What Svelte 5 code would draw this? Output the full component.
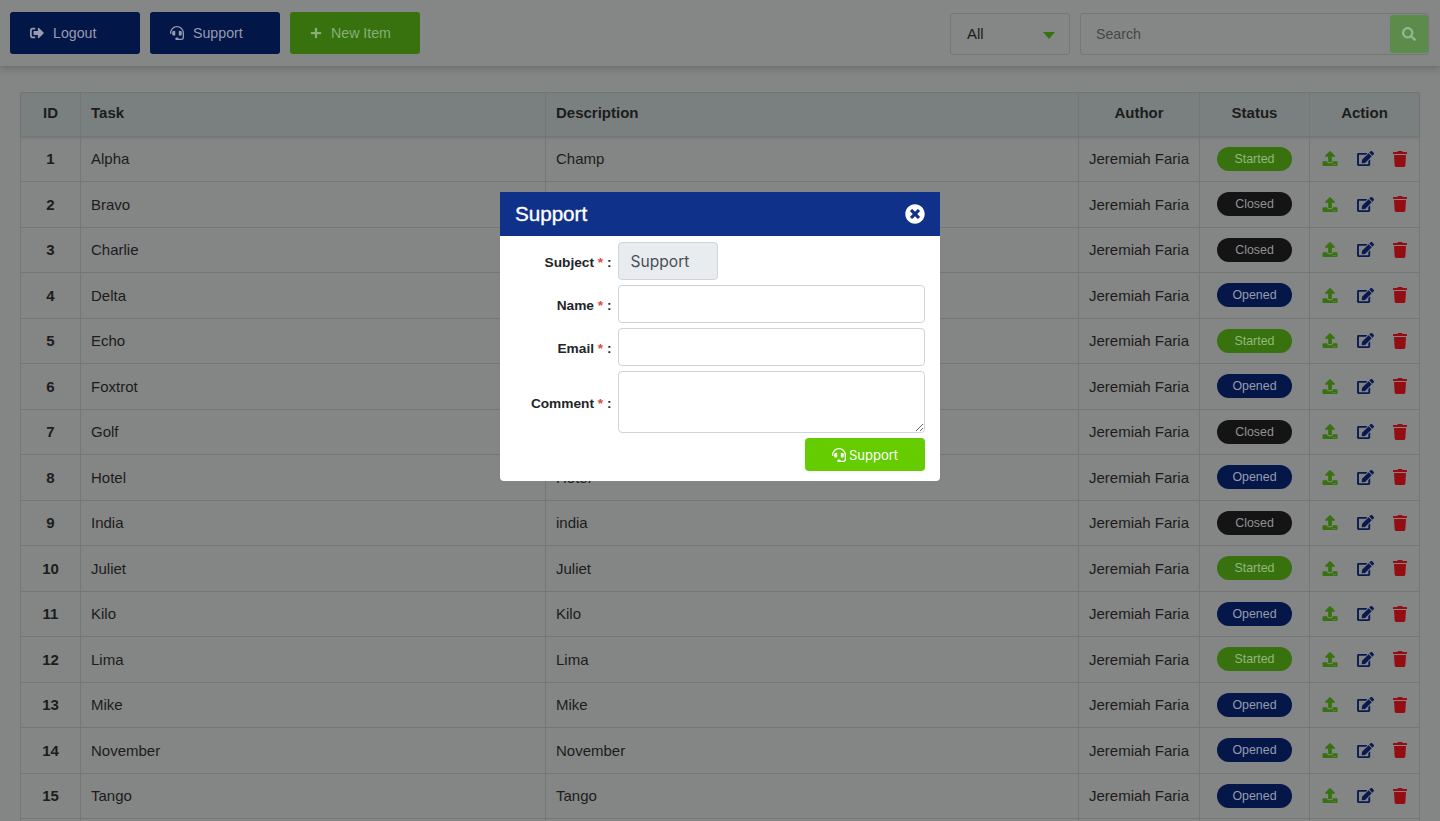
<script>
  const rows = [
    ['Alpha','Champ','Started'],['Bravo','','Closed'],['Charlie','','Closed'],['Delta','','Opened'],
    ['Echo','','Started'],['Foxtrot','','Opened'],['Golf','','Closed'],['Hotel','Hotel','Opened'],
    ['India','india','Closed'],['Juliet','Juliet','Started'],['Kilo','Kilo','Opened'],['Lima','Lima','Started'],
    ['Mike','Mike','Opened'],['November','November','Opened'],['Tango','Tango','Opened']
  ];
  const headset = 'M192 208c0-17.67-14.33-32-32-32h-16c-35.35 0-64 28.65-64 64v48c0 35.35 28.65 64 64 64h16c17.67 0 32-14.33 32-32V208zm176 144c35.35 0 64-28.65 64-64v-48c0-35.35-28.65-64-64-64h-16c-17.67 0-32 14.33-32 32v112c0 17.67 14.33 32 32 32h16zM256 0C113.18 0 4.58 118.83 0 256v16c0 8.84 7.16 16 16 16h16c8.84 0 16-7.16 16-16v-16c0-114.69 93.31-208 208-208s208 93.31 208 208h-.12c.08 2.43.12 165.72.12 165.72 0 23.35-18.93 42.28-42.28 42.28H320c0-26.51-21.49-48-48-48h-32c-26.51 0-48 21.49-48 48s21.49 48 48 48h181.72c49.86 0 90.28-40.42 90.28-90.28V256C507.42 118.83 398.82 0 256 0z';
</script>

<div class="page">
  <header class="bar">
    <button class="btn navy"><svg viewBox="0 0 512 512" class="ico"><path d="M497 273L329 441c-15 15-41 4.5-41-17v-96H152c-13.3 0-24-10.7-24-24v-96c0-13.3 10.7-24 24-24h136V88c0-21.4 25.9-32 41-17l168 168c9.3 9.4 9.3 24.6 0 34zM192 436v-40c0-6.6-5.4-12-12-12H96c-17.7 0-32-14.3-32-32V160c0-17.7 14.3-32 32-32h84c6.6 0 12-5.4 12-12V76c0-6.6-5.4-12-12-12H96c-53 0-96 43-96 96v192c0 53 43 96 96 96h84c6.6 0 12-5.4 12-12z"/></svg>Logout</button>
    <button class="btn navy"><svg viewBox="0 0 512 512" class="ico"><path d={headset}/></svg>Support</button>
    <button class="btn green"><svg viewBox="0 0 448 512" class="ico plus"><path d="M416 208H272V64c0-17.67-14.33-32-32-32h-32c-17.67 0-32 14.33-32 32v144H32c-17.67 0-32 14.33-32 32v32c0 17.67 14.33 32 32 32h144v144c0 17.67 14.33 32 32 32h32c17.67 0 32-14.33 32-32V304h144c17.67 0 32-14.33 32-32v-32c0-17.67-14.33-32-32-32z"/></svg>New Item</button>
    <div class="select">All<span class="caret"></span></div>
    <div class="search">
      <span class="placeholder">Search</span>
      <span class="search-btn"><svg viewBox="0 0 512 512"><path d="M505 442.7L405.3 343c-4.5-4.5-10.6-7-17-7H372c27.6-35.3 44-79.7 44-128C416 93.1 322.9 0 208 0S0 93.1 0 208s93.1 208 208 208c48.3 0 92.7-16.4 128-44v16.3c0 6.4 2.5 12.5 7 17l99.7 99.7c9.4 9.4 24.6 9.4 33.9 0l28.3-28.3c9.4-9.4 9.4-24.6.1-34zM208 336c-70.7 0-128-57.2-128-128 0-70.7 57.2-128 128-128 70.7 0 128 57.2 128 128 0 70.7-57.2 128-128 128z"/></svg></span>
    </div>
  </header>

  <main class="content">
    <div class="table">
      <div class="tr head">
        <div class="c center">ID</div><div class="c">Task</div><div class="c">Description</div>
        <div class="c center">Author</div><div class="c center">Status</div><div class="c center">Action</div>
      </div>
      {#each rows as r, i}
        <div class="tr">
          <div class="c center id">{i + 1}</div>
          <div class="c">{r[0]}</div>
          <div class="c">{r[1]}</div>
          <div class="c center">Jeremiah Faria</div>
          <div class="c center"><span class="badge {r[2].toLowerCase()}">{r[2]}</span></div>
          <div class="c actions">
            <svg viewBox="0 0 512 512" class="a up"><path d="M296 384h-80c-13.3 0-24-10.7-24-24V192h-87.7c-17.8 0-26.7-21.5-14.1-34.1L242.3 5.7c7.5-7.5 19.8-7.5 27.3 0l152.2 152.2c12.6 12.6 3.7 34.1-14.1 34.1H320v168c0 13.3-10.7 24-24 24zm216-8v112c0 13.3-10.7 24-24 24H24c-13.3 0-24-10.7-24-24V376c0-13.3 10.7-24 24-24h136v8c0 30.9 25.1 56 56 56h80c30.9 0 56-25.1 56-56v-8h136c13.3 0 24 10.7 24 24zm-124 88c0-11-9-20-20-20s-20 9-20 20 9 20 20 20 20-9 20-20zm64 0c0-11-9-20-20-20s-20 9-20 20 9 20 20 20 20-9 20-20z"/></svg>
            <svg viewBox="0 0 576 512" class="a ed"><path d="M402.6 83.2l90.2 90.2c3.8 3.8 3.8 10 0 13.8L274.4 405.6l-92.8 10.3c-12.4 1.4-22.9-9.1-21.5-21.5l10.3-92.8L388.8 83.2c3.8-3.8 10-3.8 13.8 0zm162-22.9l-48.8-48.8c-15.2-15.2-39.9-15.2-55.2 0l-35.4 35.4c-3.8 3.8-3.8 10 0 13.8l90.2 90.2c3.8 3.8 10 3.8 13.8 0l35.4-35.4c15.2-15.3 15.2-40 0-55.2zM384 346.2V448H64V128h229.8c3.2 0 6.2-1.3 8.5-3.5l40-40c7.6-7.6 2.2-20.5-8.5-20.5H48C21.5 64 0 85.5 0 112v352c0 26.5 21.5 48 48 48h352c26.5 0 48-21.5 48-48V306.2c0-10.7-12.9-16-20.5-8.5l-40 40c-2.2 2.3-3.5 5.3-3.5 8.5z"/></svg>
            <svg viewBox="0 0 448 512" class="a del"><path d="M432 32H312l-9.4-18.7A24 24 0 0 0 281.1 0H166.8a23.72 23.72 0 0 0-21.4 13.3L136 32H16A16 16 0 0 0 0 48v32a16 16 0 0 0 16 16h416a16 16 0 0 0 16-16V48a16 16 0 0 0-16-16zM53.2 467a48 48 0 0 0 47.9 45h245.8a48 48 0 0 0 47.9-45L416 128H32z"/></svg>
          </div>
        </div>
      {/each}
      <div class="tr">
        <div class="c"></div><div class="c"></div><div class="c"></div><div class="c"></div><div class="c"></div><div class="c"></div>
      </div>
    </div>
  </main>

  <div class="modal">
    <div class="m-head">
      <span>Support</span>
      <svg viewBox="0 0 512 512" class="close"><circle cx="256" cy="256" r="130" fill="#10318a"/><path fill="#fff" d="M256 8C119 8 8 119 8 256s111 248 248 248 248-111 248-248S393 8 256 8zm121.6 313.1c4.7 4.7 4.7 12.3 0 17L338 377.6c-4.7 4.7-12.3 4.7-17 0L256 312l-65.1 65.6c-4.7 4.7-12.3 4.7-17 0L134.4 338c-4.7-4.7-4.7-12.3 0-17l65.6-65-65.6-65.1c-4.7-4.7-4.7-12.3 0-17l39.6-39.6c4.7-4.7 12.3-4.7 17 0l65 65.7 65.1-65.6c4.7-4.7 12.3-4.7 17 0l39.6 39.6c4.7 4.7 4.7 12.3 0 17L312 256l65.6 65.1z"/></svg>
    </div>
    <div class="form">
      <label class="lab">Subject <b>*</b> :</label>
      <div class="subject">Support</div>
      <label class="lab">Name <b>*</b> :</label>
      <input class="inp" />
      <label class="lab">Email <b>*</b> :</label>
      <input class="inp" />
      <label class="lab">Comment <b>*</b> :</label>
      <textarea class="inp ta"></textarea>
      <button class="submit"><svg viewBox="0 0 512 512"><path d={headset}/></svg>Support</button>
    </div>
  </div>
</div>

<style>
  :global(body) { margin: 0; overflow: hidden; }
  .page {
    position: relative; width: 1440px; height: 821px; overflow: hidden;
    background: #848585; color: #1c1c1c;
    font-family: "Liberation Sans", Arial, sans-serif; font-size: 15px;
  }
  .bar {
    height: 66px; box-sizing: border-box; padding: 12px 11px 0 10px;
    display: flex; gap: 10px; align-items: flex-start;
    background: #858686; box-shadow: 0 2px 8px rgba(0,0,0,.22);
    position: relative;
  }
  .btn {
    width: 130px; height: 42px; border: 0; border-radius: 3px; padding: 0 0 0 20px;
    display: flex; align-items: center; gap: 9px; font: inherit; font-size: 14.2px;
    box-sizing: border-box; justify-content: flex-start;
  }
  .navy { background: #031648; color: #959cad; }
  .green { background: #37720f; color: #8aad78; }
  .ico { width: 14px; height: 14px; fill: currentColor; flex: none; }
  .plus { width: 12px; height: 12px; }
  .select {
    margin-left: auto; margin-top: 1px; width: 120px; height: 42px; box-sizing: border-box;
    border: 1px solid #757676; border-radius: 3px; padding: 0 0 1px 16px;
    display: flex; align-items: center; position: relative; font-size: 15px;
  }
  .caret {
    position: absolute; right: 14px; top: 18px; width: 0; height: 0;
    border-left: 6.5px solid transparent; border-right: 6.5px solid transparent; border-top: 7px solid #37720f;
  }
  .search {
    margin-top: 1px; width: 349px; height: 42px; box-sizing: border-box;
    border: 1px solid #757676; border-radius: 3px; position: relative;
    display: flex; align-items: center; padding-left: 15px; font-size: 14.2px; color: #454647;
  }
  .search-btn {
    position: absolute; right: 0; top: 1px; width: 38px; height: 38px; border-radius: 3px;
    background: #5c8c4c; display: flex; align-items: center; justify-content: center;
  }
  .search-btn svg { width: 14px; height: 14px; fill: #93b78a; }

  .content { padding: 26px 20px 0; }
  .table { width: 1400px; border-top: 1px solid #757676; border-left: 1px solid #757676; border-right: 1px solid #757676; box-sizing: border-box; }
  .tr {
    display: grid; grid-template-columns: 59px 465px 533px 121px 110px 1fr;
    height: 45.5px; box-sizing: border-box; border-bottom: 1px solid #757676;
  }
  .head { height: 43.5px; background: #7a807f; font-weight: 700; box-shadow: 0 1px 2px rgba(0,0,0,.12); }
  .c {
    display: flex; align-items: center; padding-left: 10px; box-sizing: border-box;
    border-left: 1px solid #757676; min-width: 0;
  }
  .head .c { padding-bottom: 3px; }
  .c:first-child { border-left: 0; }
  .center { justify-content: center; padding-left: 0; }
  .id { font-weight: 700; }
  .badge {
    width: 75px; height: 24px; border-radius: 12px; font-size: 12.4px;
    display: flex; align-items: center; justify-content: center;
  }
  .started { background: #37720f; color: #93b87c; }
  .closed { background: #141414; color: #929292; }
  .opened { background: #051748; color: #959cad; }
  .actions { padding: 0 0 0 12px; position: relative; }
  .a { height: 15px; flex: none; }
  .up { width: 16px; fill: #37720f; }
  .ed { width: 17px; fill: #091a50; margin-left: 19px; }
  .del { width: 14px; height: 16px; fill: #930d13; margin-left: 19px; }

  .modal {
    position: absolute; left: 500px; top: 192px; width: 440px; height: 289px;
    background: #fff; border-radius: 0 0 4px 4px; overflow: hidden;
  }
  .m-head {
    height: 44px; background: #10318a; color: #fff; display: flex; align-items: center;
    justify-content: space-between; padding: 0 15px; font-size: 20.6px;
  }
  .m-head span { -webkit-text-stroke: .35px #fff; }
  .close { width: 20px; height: 20px; }
  .form {
    display: grid; grid-template-columns: 111px 307.5px; column-gap: 6px; row-gap: 5px;
    padding: 6px 15px 0 0; justify-content: end;
  }
  .lab { text-align: right; font-size: 13.7px; font-weight: 700; color: #212529; align-self: center; padding-top: 3px; white-space: nowrap; }
  .lab b { color: #e0483e; }
  .subject {
    width: 100px; height: 38px; box-sizing: border-box; background: #e9ecef;
    border: 1px solid #ced4da; border-radius: 4px; padding-left: 12px;
    display: flex; align-items: center; color: #495057;
    font-family: Inter, "Liberation Sans", sans-serif; font-size: 15.6px;
  }
  .inp {
    display: block; width: 307.5px; height: 38px; box-sizing: border-box; margin: 0;
    border: 1px solid #ced4da; border-radius: 4px; background: #fff; outline: 0;
  }
  .ta { height: 62px; }
  .submit {
    grid-column: 2; justify-self: end; width: 120px; height: 33px; border: 0; border-radius: 4px;
    background: #64cc00; color: #fff; display: flex; align-items: center; justify-content: center; gap: 3px;
    font-family: Inter, "Liberation Sans", sans-serif; font-size: 13px;
  }
  .submit svg { width: 14px; height: 14px; fill: #fff; }
</style>
